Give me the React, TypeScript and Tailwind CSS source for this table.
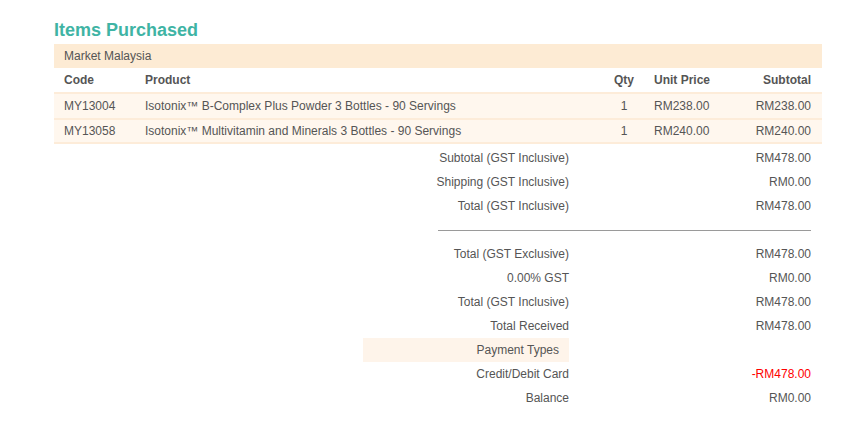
import React from "react";

const items = [
  { code: "MY13004", product: "Isotonix™ B-Complex Plus Powder 3 Bottles - 90 Servings", qty: "1", unit: "RM238.00", sub: "RM238.00" },
  { code: "MY13058", product: "Isotonix™ Multivitamin and Minerals 3 Bottles - 90 Servings", qty: "1", unit: "RM240.00", sub: "RM240.00" },
];

function SumRow({ label, value, red }: { label: string; value: string; red?: boolean }) {
  return (
    <div className="flex h-[24px] items-center">
      <div className="w-[309px]" />
      <div className="w-[206px] text-right">{label}</div>
      <div className={"w-[242px] text-right " + (red ? "text-[#ff0000]" : "")}>{value}</div>
    </div>
  );
}

export default function App() {
  return (
    <div
      className="min-h-[424px] w-[850px] bg-white pl-[54px] pt-[19px] text-[12px] text-[#555555]"
      style={{ fontFamily: '"Liberation Sans", Arial, sans-serif' }}
    >
      <h2 className="mb-[3px] text-[18px] font-bold leading-[22px] text-[#3fb4a4]">Items Purchased</h2>
      <div className="w-[768px]">
        <div className="flex h-[24px] items-center bg-[#fdebd4] pl-[10px]">Market Malaysia</div>
        <div className="flex h-[24px] items-center pl-[10px] pr-[11px] font-bold">
          <div className="w-[81px]">Code</div>
          <div className="w-[459px]">Product</div>
          <div className="w-[40px] text-center">Qty</div>
          <div className="w-[90px] pl-[10px]">Unit Price</div>
          <div className="flex-1 text-right">Subtotal</div>
        </div>
        {items.map((it, i) => (
          <div
            key={it.code}
            className={
              "flex h-[26px] items-center border-t-2 border-[#fdecd9] bg-[#fff7ee] pl-[10px] pr-[11px] " +
              (i === items.length - 1 ? "border-b-2" : "")
            }
          >
            <div className="w-[81px]">{it.code}</div>
            <div className="w-[459px]">{it.product}</div>
            <div className="w-[40px] text-center">{it.qty}</div>
            <div className="w-[90px] pl-[10px]">{it.unit}</div>
            <div className="flex-1 text-right">{it.sub}</div>
          </div>
        ))}
        <div className="mt-[2px]">
          <SumRow label="Subtotal (GST Inclusive)" value="RM478.00" />
          <SumRow label="Shipping (GST Inclusive)" value="RM0.00" />
          <SumRow label="Total (GST Inclusive)" value="RM478.00" />
          <div className="flex h-[24px] items-center">
            <div className="ml-[384px] w-[373px] border-t border-[#9a9a9a]" />
          </div>
          <SumRow label="Total (GST Exclusive)" value="RM478.00" />
          <SumRow label="0.00% GST" value="RM0.00" />
          <SumRow label="Total (GST Inclusive)" value="RM478.00" />
          <SumRow label="Total Received" value="RM478.00" />
          <div className="flex h-[24px] items-center">
            <div className="w-[309px]" />
            <div className="flex h-[24px] w-[206px] items-center justify-end bg-[#fef4ea] pr-[10px]">Payment Types</div>
            <div className="w-[242px]" />
          </div>
          <SumRow label="Credit/Debit Card" value="-RM478.00" red />
          <SumRow label="Balance" value="RM0.00" />
        </div>
      </div>
    </div>
  );
}
